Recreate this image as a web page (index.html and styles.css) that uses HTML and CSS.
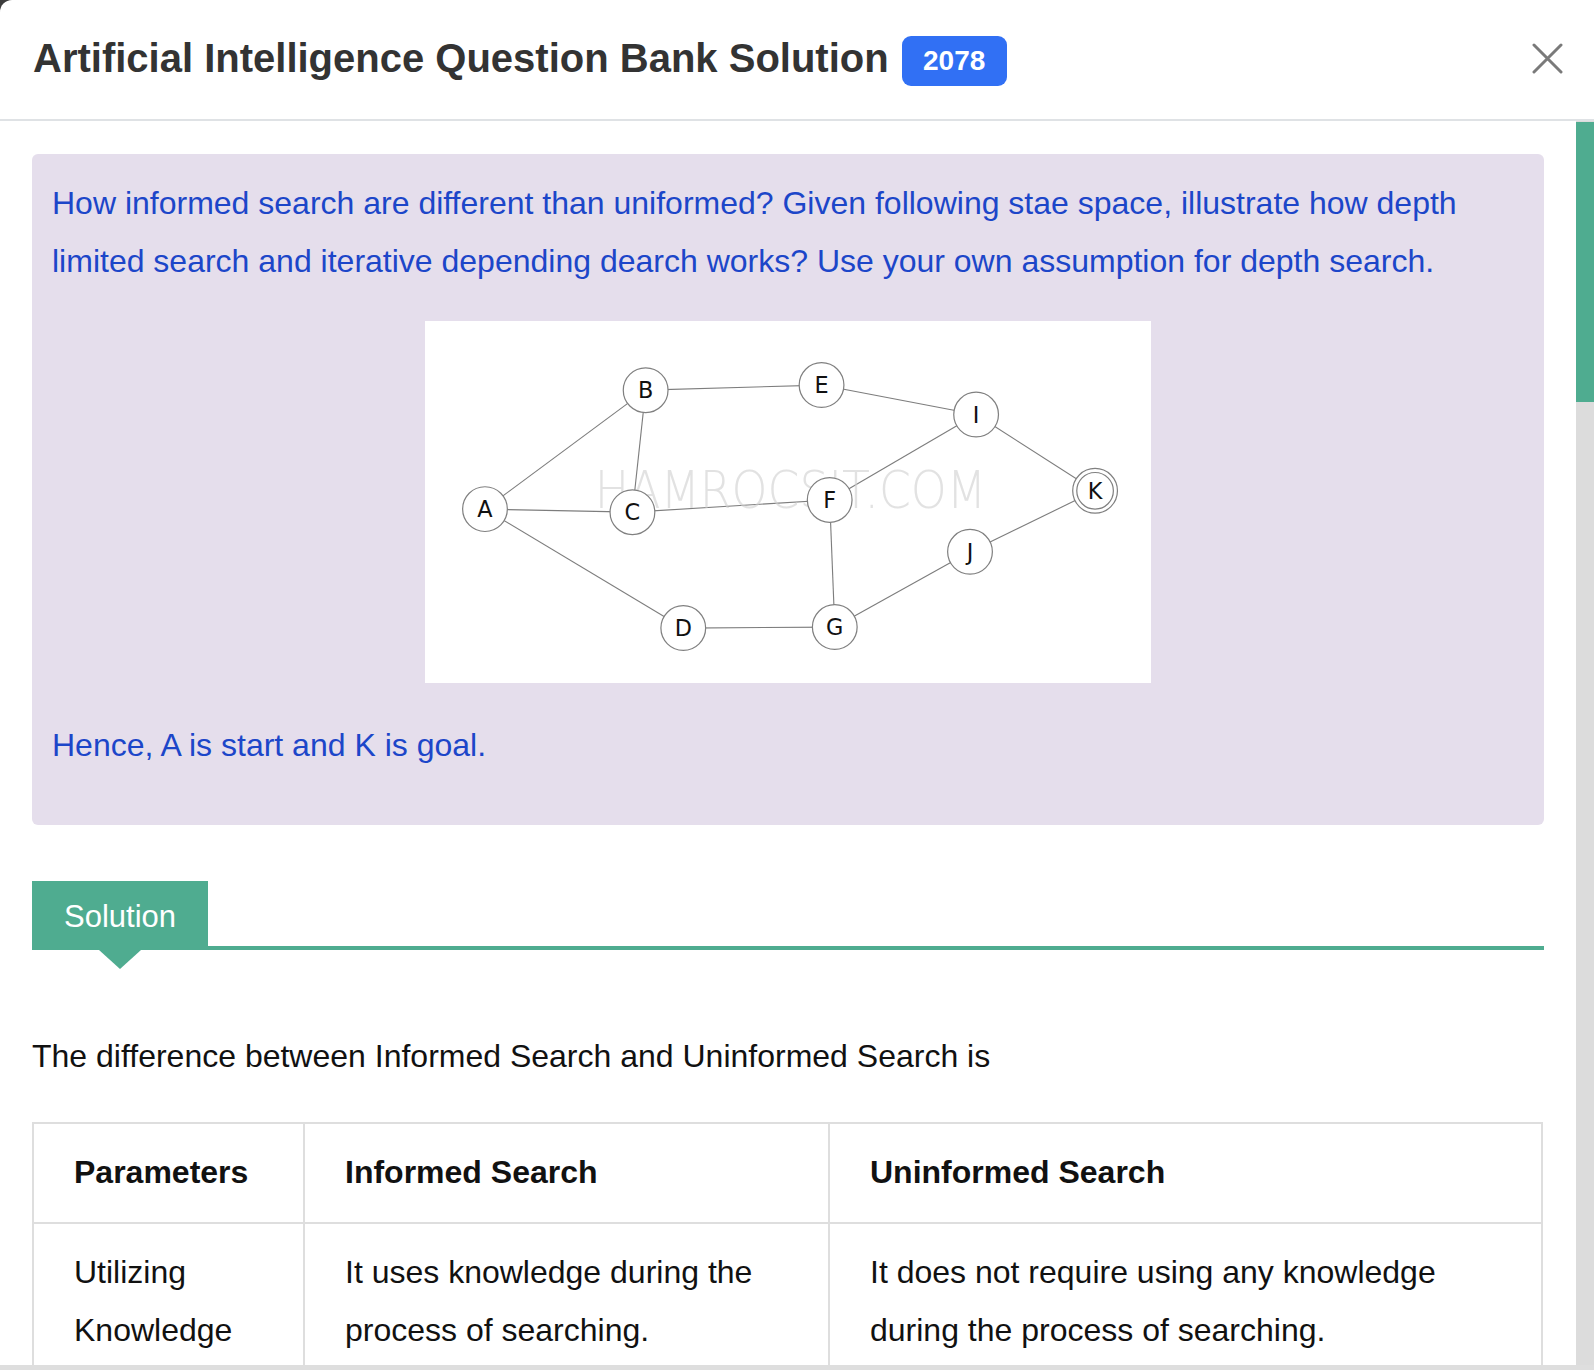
FILE: index.html
```html
<!DOCTYPE html>
<html lang="en">
<head>
<meta charset="utf-8">
<title>Artificial Intelligence Question Bank Solution</title>
<link rel="stylesheet" href="styles.css">
</head>
<body>
<div class="modal">
  <header class="modal-header">
    <h1 class="modal-title">Artificial Intelligence Question Bank Solution</h1>
    <span class="badge">2078</span>
    <button class="close" aria-label="Close">
      <svg width="31" height="31" viewBox="0 0 31 31"><path d="M2 2 L29 29 M29 2 L2 29" stroke="#7a7a7a" stroke-width="3" stroke-linecap="round" fill="none"/></svg>
    </button>
  </header>
  <div class="modal-body">
    <div class="content">
      <section class="question">
        <p class="q-text">How informed search are different than uniformed? Given following stae space, illustrate how depth limited search and iterative depending dearch works? Use your own assumption for depth search.</p>
        <div class="figure">
          <svg class="graph" width="726" height="362" viewBox="0 0 714 356">
            <rect width="714" height="356" fill="#fff"/>
            <g stroke="#7d7d7d" stroke-width="1.1" fill="none">
              <line x1="59" y1="185" x2="217" y2="68"/>
              <line x1="59" y1="185" x2="204" y2="188"/>
              <line x1="59" y1="185" x2="254" y2="302"/>
              <line x1="217" y1="68" x2="204" y2="188"/>
              <line x1="217" y1="68" x2="390" y2="63"/>
              <line x1="204" y1="188" x2="398" y2="176"/>
              <line x1="390" y1="63" x2="542" y2="92"/>
              <line x1="398" y1="176" x2="542" y2="92"/>
              <line x1="398" y1="176" x2="403" y2="301"/>
              <line x1="254" y1="302" x2="403" y2="301"/>
              <line x1="403" y1="301" x2="536" y2="227"/>
              <line x1="536" y1="227" x2="659" y2="167"/>
              <line x1="542" y1="92" x2="659" y2="167"/>
            </g>
            <text class="wm" x="167" y="184" textLength="385" lengthAdjust="spacingAndGlyphs">HAMROCSIT.COM</text>
            <g stroke="#808080" stroke-width="1.2" fill="#fff">
              <circle cx="59" cy="185" r="22"/>
              <circle cx="217" cy="68" r="22"/>
              <circle cx="204" cy="188" r="22"/>
              <circle cx="254" cy="302" r="22"/>
              <circle cx="390" cy="63" r="22"/>
              <circle cx="398" cy="176" r="22"/>
              <circle cx="403" cy="301" r="22"/>
              <circle cx="542" cy="92" r="22"/>
              <circle cx="536" cy="227" r="22"/>
              <circle cx="659" cy="167" r="22"/>
              <circle cx="659" cy="167" r="18"/>
            </g>
            <g class="lbl" text-anchor="middle">
              <text x="59" y="193">A</text>
              <text x="217" y="76">B</text>
              <text x="204" y="196">C</text>
              <text x="254" y="310">D</text>
              <text x="390" y="71">E</text>
              <text x="398" y="184">F</text>
              <text x="403" y="309">G</text>
              <text x="542" y="100">I</text>
              <text x="536" y="235">J</text>
              <text x="659" y="175">K</text>
            </g>
          </svg>
        </div>
        <p class="q-text q-last">Hence, A is start and K is goal.</p>
      </section>

      <div class="sol-head">
        <div class="sol-tab">Solution</div>
        <div class="sol-line"></div>
      </div>

      <p class="intro">The difference between Informed Search and Uninformed Search is</p>

      <table class="cmp">
        <colgroup>
          <col class="c1"><col class="c2"><col class="c3">
        </colgroup>
        <thead>
          <tr><th>Parameters</th><th>Informed Search</th><th>Uninformed Search</th></tr>
        </thead>
        <tbody>
          <tr><td>Utilizing Knowledge</td><td>It uses knowledge during the process of searching.</td><td>It does not require using any knowledge during the process of searching.</td></tr>
        </tbody>
      </table>
    </div>
    <div class="scrollbar"><div class="thumb"></div></div>
  </div>
  <div class="modal-footer"></div>
</div>
</body>
</html>
```

FILE: styles.css
```css
html, body {
  margin: 0;
  padding: 0;
}
body {
  background: #3c3c3c;
  font-family: "Liberation Sans", Arial, Helvetica, sans-serif;
  overflow: hidden;
}
.modal {
  width: 1594px;
  height: 1370px;
  background: #fff;
  border-radius: 12px 0 0 0;
  display: flex;
  flex-direction: column;
  overflow: hidden;
}
.modal-header {
  height: 119px;
  flex: 0 0 auto;
  border-bottom: 2px solid #dfe2e5;
  display: flex;
  align-items: center;
  padding: 0 31px 0 33px;
}
.modal-title {
  margin: 0 0 4px;
  font-size: 40px;
  font-weight: 700;
  color: #333;
  line-height: 1;
}
.badge {
  margin-left: 13px;
  width: 105px;
  height: 50px;
  border-radius: 9px;
  background: #3170f4;
  color: #fff;
  font-size: 28px;
  font-weight: 700;
  display: flex;
  align-items: center;
  justify-content: center;
  margin-top: 2px;
}
.close {
  margin-left: auto;
  border: 0;
  background: none;
  padding: 0;
  width: 31px;
  height: 31px;
  display: block;
  margin-bottom: 3px;
}
.close svg { display: block; }

.modal-body {
  flex: 1 1 auto;
  min-height: 0;
  display: flex;
}
.content {
  flex: 1 1 auto;
  min-width: 0;
  overflow: hidden;
  padding: 33px 32px 0 32px;
}
.scrollbar {
  width: 18px;
  flex: 0 0 18px;
  background: #dcdcdc;
  padding-top: 1px;
}
.thumb {
  height: 280px;
  background: #4fac90;
}
.modal-footer {
  height: 5px;
  flex: 0 0 5px;
  background: #dedede;
}

.question {
  background: #e5deec;
  border-radius: 6px;
  padding: 21px 20px 20px 20px;
}
.q-text {
  margin: 0 0 31px;
  font-size: 32px;
  line-height: 1.8;
  color: #1c46c9;
}
.q-last {
  margin: 0 0 30px;
}
.figure {
  display: flex;
  justify-content: center;
  margin-bottom: 34px;
}
.graph { display: block; }
.graph .wm {
  font-family: "DejaVu Sans", sans-serif;
  font-weight: 200;
  font-size: 50px;
  fill: #d0d0d0;
  opacity: 0.6;
}
.graph .lbl text {
  font-family: "DejaVu Sans", sans-serif;
  font-size: 22px;
  fill: #111;
}

.sol-head {
  margin-top: 56px;
  display: flex;
  align-items: flex-end;
}
.sol-tab {
  position: relative;
  width: 176px;
  height: 69px;
  background: #4fac90;
  color: #fff;
  font-size: 31px;
  line-height: 71px;
  text-align: center;
}
.sol-tab::after {
  content: "";
  position: absolute;
  left: 67px;
  top: 69px;
  width: 0;
  height: 0;
  border-left: 21px solid transparent;
  border-right: 21px solid transparent;
  border-top: 19px solid #4fac90;
}
.sol-line {
  flex: 1 1 auto;
  height: 4px;
  background: #4fac90;
}

.intro {
  margin: 78px 0 37px;
  font-size: 32px;
  line-height: 1.8;
  color: #111;
}
.cmp {
  width: 1511px;
  border-collapse: collapse;
  table-layout: fixed;
  font-size: 32px;
  line-height: 1.8;
  color: #111;
}
.cmp .c1 { width: 271px; }
.cmp .c2 { width: 525px; }
.cmp th, .cmp td {
  border: 2px solid #dedede;
  padding: 20px 40px;
  text-align: left;
  vertical-align: top;
}
.cmp th { font-weight: 700; }
```
